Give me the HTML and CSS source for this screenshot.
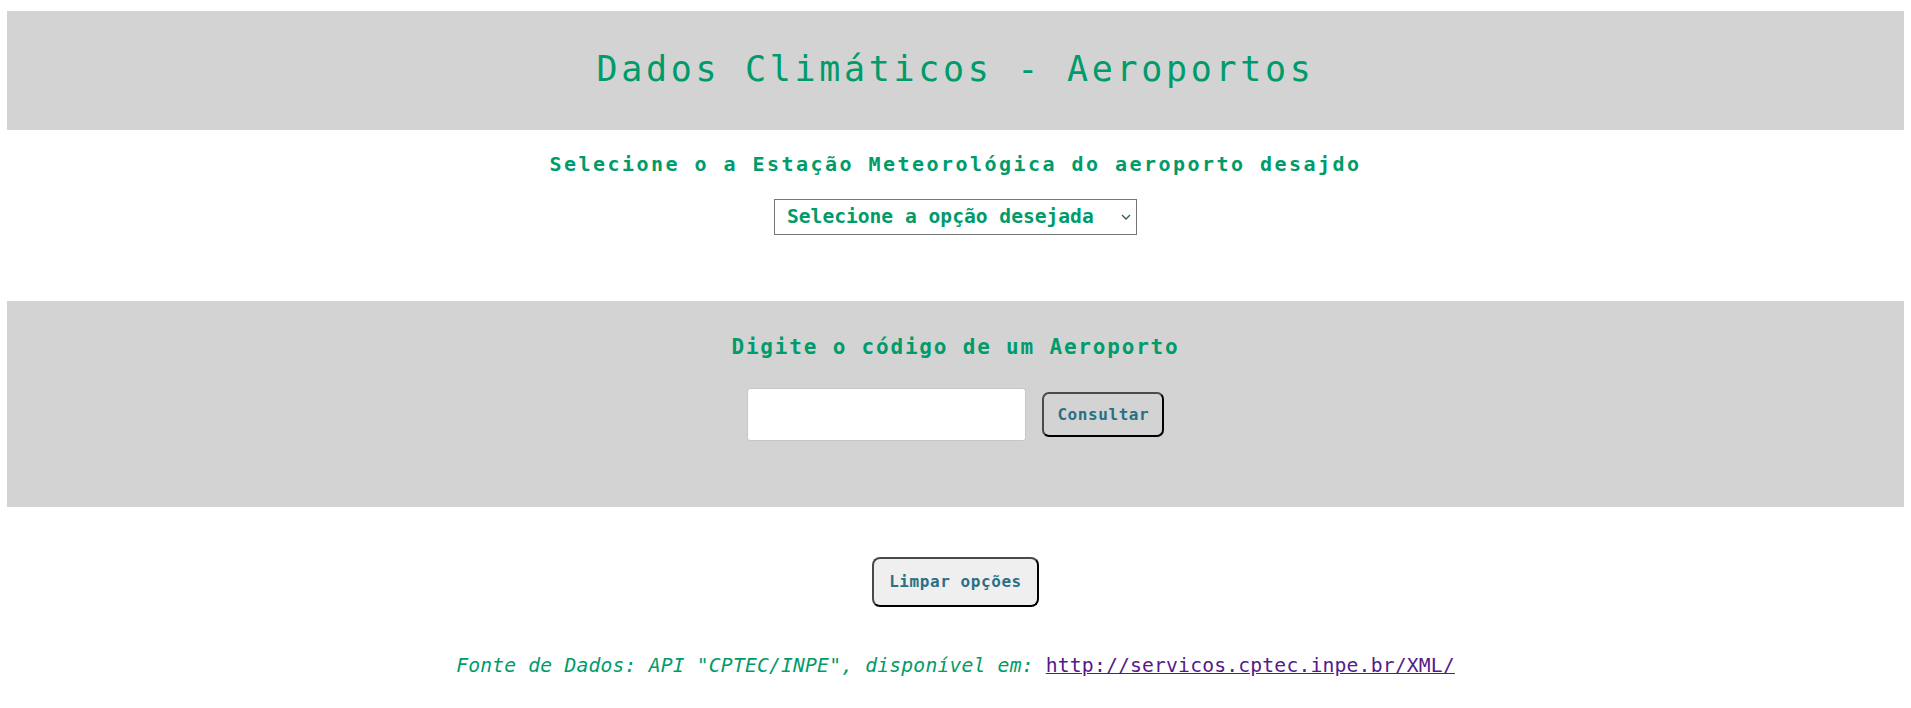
FILE: index.html
```html
<!DOCTYPE html>
<html lang="pt-BR">
<head>
<meta charset="utf-8">
<title>Dados Climáticos - Aeroportos</title>
<link rel="stylesheet" href="styles.css">
</head>
<body>
  <header class="banner">
    <h1 class="banner-title">Dados Climáticos - Aeroportos</h1>
  </header>

  <section class="station">
    <h3 class="station-title">Selecione o a Estação Meteorológica do aeroporto desajdo</h3>
    <span class="select-wrap">
      <select class="station-select">
        <option>Selecione a opção desejada</option>
      </select>
      <svg class="select-chevron" width="10" height="6" viewBox="0 0 10 6" aria-hidden="true">
        <polyline points="1,1 5,5 9,1" fill="none" stroke="#2f5f4f" stroke-width="1.3"/>
      </svg>
    </span>
  </section>

  <section class="search">
    <h3 class="search-title">Digite o código de um Aeroporto</h3>
    <div class="search-row">
      <input class="search-input" type="text">
      <button class="btn btn-consult">Consultar</button>
    </div>
  </section>

  <div class="clear-wrap">
    <button class="btn btn-clear">Limpar opções</button>
  </div>

  <p class="source">Fonte de Dados: API "CPTEC/INPE", disponível em: <a class="source-link" href="#">http://servicos.cptec.inpe.br/XML/</a></p>
</body>
</html>
```

FILE: styles.css
```css
html, body {
  background: #ffffff;
}

body {
  margin: 11px 7px 0;
  font-family: "DejaVu Sans Mono", "Liberation Mono", monospace;
  color: #009b6a;
}

.banner {
  background: #d3d3d3;
  padding: 41.1px 0 42.9px;
  text-align: center;
}

.banner-title {
  margin: 0;
  font-size: 35px;
  line-height: 35px;
  font-weight: normal;
  letter-spacing: 3.68px;
  color: #009b6a;
}

.station {
  text-align: center;
  padding: 24.1px 0 66px;
}

.station-title {
  margin: 0 0 24.9px;
  font-size: 20px;
  line-height: 20px;
  font-weight: bold;
  letter-spacing: 2.46px;
  color: #009b6a;
}

.select-wrap {
  position: relative;
  display: inline-block;
  vertical-align: top;
}

.station-select {
  display: block;
  -webkit-appearance: none;
  appearance: none;
  box-sizing: border-box;
  width: 363px;
  height: 36px;
  margin: 0;
  padding: 0 30px 0 12px;
  border: 1px solid #767676;
  border-radius: 0;
  background: #ffffff;
  font-family: "DejaVu Sans Mono", "Liberation Mono", monospace;
  font-size: 19.6px;
  font-weight: bold;
  color: #009b6a;
  outline: none;
}

.select-chevron {
  position: absolute;
  right: 6px;
  top: 15px;
  pointer-events: none;
}

.search {
  background: #d3d3d3;
  text-align: center;
  padding: 36.2px 0 66px;
}

.search-title {
  margin: 0 0 29.8px;
  font-size: 21px;
  line-height: 21px;
  font-weight: bold;
  letter-spacing: 1.81px;
  color: #009b6a;
}

.search-row {
  display: flex;
  justify-content: center;
  align-items: center;
  gap: 16.7px;
}

.search-input {
  box-sizing: border-box;
  width: 279px;
  height: 53px;
  margin: 0;
  padding: 0 8px;
  border: 1px solid #c6c6c6;
  border-radius: 3px;
  background: #ffffff;
  font-family: "DejaVu Sans Mono", "Liberation Mono", monospace;
  font-size: 18px;
  outline: none;
}

.btn {
  box-sizing: border-box;
  margin: 0;
  border-style: solid;
  border-width: 2px;
  border-color: #4a4a4a #000000 #000000 #4a4a4a;
  font-family: "DejaVu Sans Mono", "Liberation Mono", monospace;
  font-size: 16px;
  font-weight: bold;
  letter-spacing: 0.57px;
  color: #2b6f85;
  cursor: pointer;
}

.btn-consult {
  width: 122px;
  height: 45px;
  padding: 0;
  border-radius: 7px;
  background: #d3d3d3;
}

.clear-wrap {
  display: flex;
  justify-content: center;
  padding-top: 50px;
}

.btn-clear {
  width: 167px;
  height: 50px;
  padding: 0;
  border-radius: 8px;
  background: #efefef;
}

.source {
  margin: 49.3px 0 0;
  text-align: center;
  font-size: 19.7px;
  line-height: 19.7px;
  letter-spacing: 0.18px;
  font-style: italic;
  color: #009b6a;
}

.source-link {
  font-style: normal;
  color: #551a8b;
  text-decoration: underline;
}
```
